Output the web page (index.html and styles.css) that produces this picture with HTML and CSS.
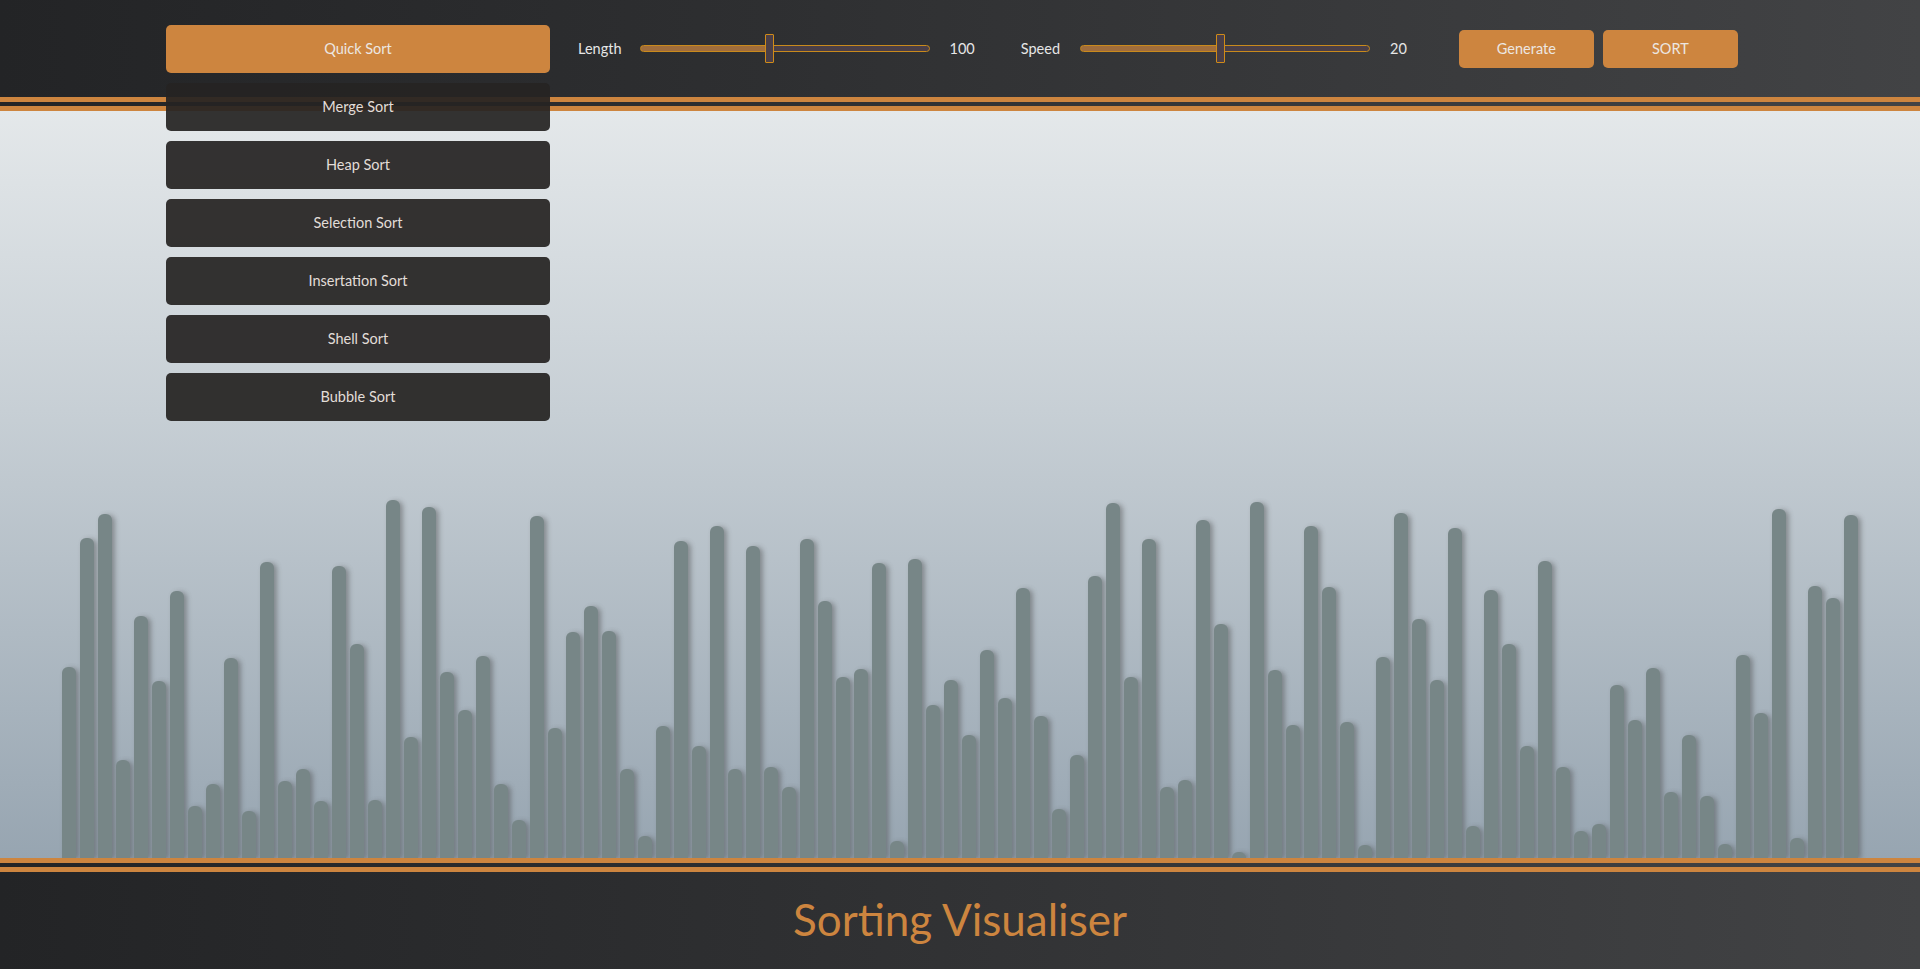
FILE: index.html
```html
<!DOCTYPE html>
<html lang="en">
<head>
<meta charset="utf-8">
<title>Sorting Visualiser</title>
<link rel="stylesheet" href="styles.css">
</head>
<body>
<header class="topbar">
  <div class="algo">
    <button class="btn btn-primary algo-toggle">Quick Sort</button>
    <ul class="algo-menu">
      <li><button class="btn btn-dark">Merge Sort</button></li>
      <li><button class="btn btn-dark">Heap Sort</button></li>
      <li><button class="btn btn-dark">Selection Sort</button></li>
      <li><button class="btn btn-dark">Insertation Sort</button></li>
      <li><button class="btn btn-dark">Shell Sort</button></li>
      <li><button class="btn btn-dark">Bubble Sort</button></li>
    </ul>
  </div>
  <div class="ctrl ctrl-length">
    <span class="ctrl-label">Length</span>
    <div class="range" style="--pos:125px">
      <span class="range-thumb"></span>
    </div>
    <span class="ctrl-value">100</span>
  </div>
  <div class="ctrl ctrl-speed">
    <span class="ctrl-label">Speed</span>
    <div class="range" style="--pos:136px">
      <span class="range-thumb"></span>
    </div>
    <span class="ctrl-value">20</span>
  </div>
  <div class="actions">
    <button class="btn btn-primary btn-action">Generate</button>
    <button class="btn btn-primary btn-action">SORT</button>
  </div>
</header>

<main class="stage">
  <div class="bars">
    <div class="bar" style="height:191px"></div>
    <div class="bar" style="height:320px"></div>
    <div class="bar" style="height:344px"></div>
    <div class="bar" style="height:98px"></div>
    <div class="bar" style="height:242px"></div>
    <div class="bar" style="height:177px"></div>
    <div class="bar" style="height:267px"></div>
    <div class="bar" style="height:52px"></div>
    <div class="bar" style="height:74px"></div>
    <div class="bar" style="height:200px"></div>
    <div class="bar" style="height:47px"></div>
    <div class="bar" style="height:296px"></div>
    <div class="bar" style="height:77px"></div>
    <div class="bar" style="height:89px"></div>
    <div class="bar" style="height:57px"></div>
    <div class="bar" style="height:292px"></div>
    <div class="bar" style="height:214px"></div>
    <div class="bar" style="height:58px"></div>
    <div class="bar" style="height:358px"></div>
    <div class="bar" style="height:121px"></div>
    <div class="bar" style="height:351px"></div>
    <div class="bar" style="height:186px"></div>
    <div class="bar" style="height:148px"></div>
    <div class="bar" style="height:202px"></div>
    <div class="bar" style="height:74px"></div>
    <div class="bar" style="height:38px"></div>
    <div class="bar" style="height:342px"></div>
    <div class="bar" style="height:130px"></div>
    <div class="bar" style="height:226px"></div>
    <div class="bar" style="height:252px"></div>
    <div class="bar" style="height:227px"></div>
    <div class="bar" style="height:89px"></div>
    <div class="bar" style="height:22px"></div>
    <div class="bar" style="height:132px"></div>
    <div class="bar" style="height:317px"></div>
    <div class="bar" style="height:112px"></div>
    <div class="bar" style="height:332px"></div>
    <div class="bar" style="height:89px"></div>
    <div class="bar" style="height:312px"></div>
    <div class="bar" style="height:91px"></div>
    <div class="bar" style="height:71px"></div>
    <div class="bar" style="height:319px"></div>
    <div class="bar" style="height:257px"></div>
    <div class="bar" style="height:181px"></div>
    <div class="bar" style="height:189px"></div>
    <div class="bar" style="height:295px"></div>
    <div class="bar" style="height:17px"></div>
    <div class="bar" style="height:299px"></div>
    <div class="bar" style="height:153px"></div>
    <div class="bar" style="height:178px"></div>
    <div class="bar" style="height:123px"></div>
    <div class="bar" style="height:208px"></div>
    <div class="bar" style="height:160px"></div>
    <div class="bar" style="height:270px"></div>
    <div class="bar" style="height:142px"></div>
    <div class="bar" style="height:49px"></div>
    <div class="bar" style="height:103px"></div>
    <div class="bar" style="height:282px"></div>
    <div class="bar" style="height:355px"></div>
    <div class="bar" style="height:181px"></div>
    <div class="bar" style="height:319px"></div>
    <div class="bar" style="height:71px"></div>
    <div class="bar" style="height:78px"></div>
    <div class="bar" style="height:338px"></div>
    <div class="bar" style="height:234px"></div>
    <div class="bar" style="height:6px"></div>
    <div class="bar" style="height:356px"></div>
    <div class="bar" style="height:188px"></div>
    <div class="bar" style="height:133px"></div>
    <div class="bar" style="height:332px"></div>
    <div class="bar" style="height:271px"></div>
    <div class="bar" style="height:136px"></div>
    <div class="bar" style="height:13px"></div>
    <div class="bar" style="height:201px"></div>
    <div class="bar" style="height:345px"></div>
    <div class="bar" style="height:239px"></div>
    <div class="bar" style="height:178px"></div>
    <div class="bar" style="height:330px"></div>
    <div class="bar" style="height:32px"></div>
    <div class="bar" style="height:268px"></div>
    <div class="bar" style="height:214px"></div>
    <div class="bar" style="height:112px"></div>
    <div class="bar" style="height:297px"></div>
    <div class="bar" style="height:91px"></div>
    <div class="bar" style="height:27px"></div>
    <div class="bar" style="height:34px"></div>
    <div class="bar" style="height:173px"></div>
    <div class="bar" style="height:138px"></div>
    <div class="bar" style="height:190px"></div>
    <div class="bar" style="height:66px"></div>
    <div class="bar" style="height:123px"></div>
    <div class="bar" style="height:62px"></div>
    <div class="bar" style="height:14px"></div>
    <div class="bar" style="height:203px"></div>
    <div class="bar" style="height:145px"></div>
    <div class="bar" style="height:349px"></div>
    <div class="bar" style="height:20px"></div>
    <div class="bar" style="height:272px"></div>
    <div class="bar" style="height:260px"></div>
    <div class="bar" style="height:343px"></div>
  </div>
</main>

<footer class="footbar">
  <h1 class="title">Sorting Visualiser</h1>
</footer>
</body>
</html>
```

FILE: styles.css
```css
* {
  box-sizing: border-box;
}

html, body {
  margin: 0;
  padding: 0;
  height: 969px;
  overflow: hidden;
}

body {
  font-family: Lato, "Open Sans", sans-serif;
  color: #e6e6e6;
  display: flex;
  flex-direction: column;
  background: #2a2b2d;
}

/* ---------- header ---------- */
.topbar {
  height: 111px;
  flex: none;
  display: flex;
  align-items: center;
  padding: 0 0 0 166px;
  background: linear-gradient(to right, #232426 0%, #2e2f31 40%, #424345 100%);
  border-bottom: 14px double #cd853f;
  position: relative;
  z-index: 2;
}

.btn {
  font-family: Lato, "Open Sans", sans-serif;
  font-size: 14.5px;
  color: #ece7e2;
  border: none;
  border-radius: 5px;
  cursor: pointer;
  padding: 0;
  display: flex;
  align-items: center;
  justify-content: center;
}

.btn-primary {
  background: #cd853f;
}

.btn-dark {
  background: rgba(38, 35, 34, 0.93);
  color: #e2ddd8;
}

.algo {
  position: relative;
  width: 384px;
  flex: none;
}

.algo-toggle {
  width: 384px;
  height: 48px;
}

.algo-menu {
  list-style: none;
  margin: 0;
  padding: 0;
  position: absolute;
  top: 58px;
  left: 0;
  width: 384px;
  display: flex;
  flex-direction: column;
  gap: 10px;
}

.algo-menu .btn {
  width: 384px;
  height: 48px;
}

.ctrl {
  display: flex;
  align-items: center;
  flex: none;
}

.ctrl-length {
  margin-left: 28px;
}

.ctrl-speed {
  margin-left: 46px;
}

.ctrl-label {
  font-size: 14.5px;
  color: #e6e6e6;
  margin-right: 18px;
}

.ctrl-speed .ctrl-label {
  margin-right: 20px;
}

.ctrl-value {
  font-size: 14.5px;
  color: #e6e6e6;
  margin-left: 20px;
}

.range {
  position: relative;
  width: 290px;
  height: 7px;
  border: 1px solid #c98a1c;
  border-radius: 4px;
  background: linear-gradient(to right, #a06d3c 0, #a06d3c var(--pos), #4a3f48 var(--pos), #4a3f48 100%);
}

.range-thumb {
  position: absolute;
  left: calc(var(--pos) - 1px);
  top: -12px;
  width: 9px;
  height: 29px;
  background: #4a3f48;
  border: 1px solid #d08b18;
  border-radius: 1px;
}

.actions {
  display: flex;
  gap: 9px;
  margin-left: 52px;
  flex: none;
}

.btn-action {
  width: 135px;
  height: 38px;
}

/* ---------- stage ---------- */
.stage {
  height: 747px;
  flex: none;
  display: flex;
  justify-content: center;
  align-items: flex-end;
  background: linear-gradient(to bottom, #e4e8ea 0%, #c7cfd5 40%, #97a5b1 100%);
  position: relative;
  z-index: 1;
}

.bars {
  display: flex;
  align-items: flex-end;
  gap: 4px;
}

.bar {
  width: 14px;
  background: #778687;
  border-radius: 6px 6px 0 0;
  box-shadow: 3px 1px 5px rgba(70, 70, 70, 0.45);
}

/* ---------- footer ---------- */
.footbar {
  height: 111px;
  flex: none;
  display: flex;
  align-items: center;
  justify-content: center;
  background: linear-gradient(to right, #232426 0%, #2e2f31 40%, #424345 100%);
  border-top: 14px double #cd853f;
  position: relative;
  z-index: 2;
}

.title {
  margin: 0;
  font-family: Lato, "Open Sans", sans-serif;
  font-weight: 400;
  font-size: 44px;
  color: #cd853f;
  line-height: 1;
  padding-bottom: 4px;
}
```
